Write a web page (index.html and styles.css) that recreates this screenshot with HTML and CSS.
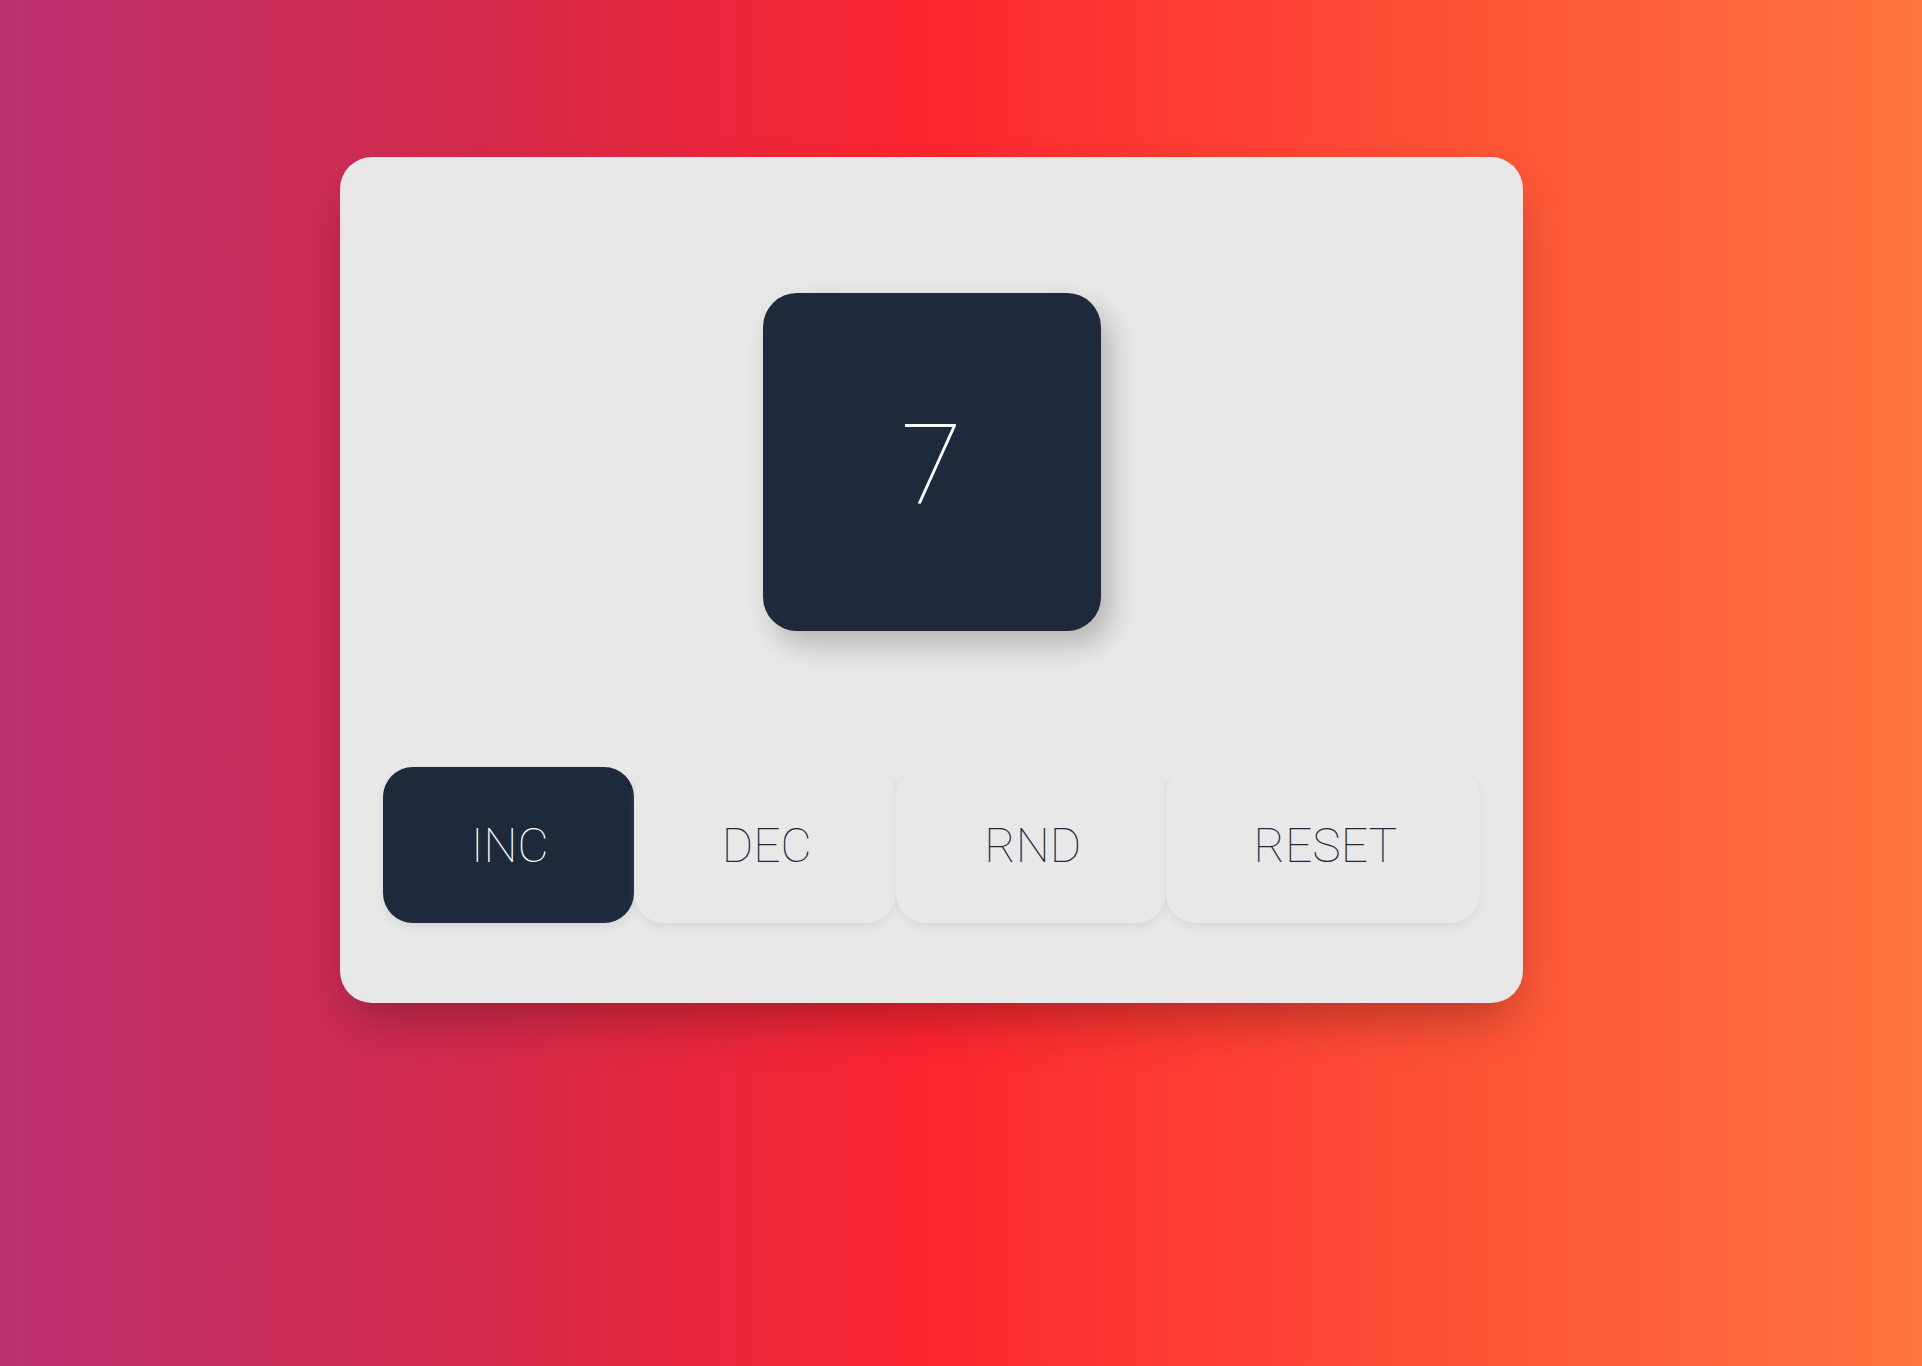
FILE: index.html
```html
<!DOCTYPE html>
<html lang="en">
<head>
<meta charset="utf-8">
<title>Counter</title>
<link rel="stylesheet" href="styles.css">
</head>
<body>
<main class="page">
  <section class="card">
    <div class="display"><span class="value">7</span></div>
    <div class="controls">
      <button class="btn btn-active">INC</button>
      <button class="btn">DEC</button>
      <button class="btn">RND</button>
      <button class="btn">RESET</button>
    </div>
  </section>
</main>
</body>
</html>
```
FILE: styles.css
```css
html, body {
  margin: 0;
  padding: 0;
  height: 100%;
}
body {
  background: linear-gradient(to right, #bb3170 0%, #d42a4a 25%, #fc2430 48%, #fd5135 75%, #ff7440 100%);
  font-family: "Roboto", "Inter", sans-serif;
  overflow: hidden;
}
.page {
  padding: 157px 0 0 340px;
}
.card {
  box-sizing: border-box;
  width: 1183px;
  height: 846px;
  background: #e8e8e8;
  border-radius: 32px;
  padding: 136px 43px 0 43px;
  box-shadow: 0 25px 50px -12px rgba(0, 0, 0, 0.3);
  display: flex;
  flex-direction: column;
  align-items: center;
}
.display {
  width: 338px;
  height: 338px;
  border-radius: 34px;
  background: #1e293b;
  display: flex;
  align-items: center;
  justify-content: center;
  box-shadow: 10px 14px 28px rgba(0, 0, 0, 0.22);
  margin-bottom: 136px;
}
.value {
  color: #ffffff;
  font-family: "Roboto", "Inter", sans-serif;
  font-size: 112px;
  font-weight: 100;
  line-height: 1;
  padding-top: 6px;
}
.controls {
  display: flex;
  width: 100%;
}
.btn {
  flex: 1 1 auto;
  min-width: 0;
  height: 156px;
  padding: 0 88px;
  border: none;
  border-radius: 30px;
  background: #e8e8e8;
  color: #1e293b;
  font-family: "Roboto", "Inter", sans-serif;
  font-size: 48px;
  font-weight: 100;
  box-shadow: 0 4px 8px rgba(148, 163, 184, 0.22);
  cursor: pointer;
}
.btn-active {
  background: #1e293b;
  color: #ffffff;
}
```
